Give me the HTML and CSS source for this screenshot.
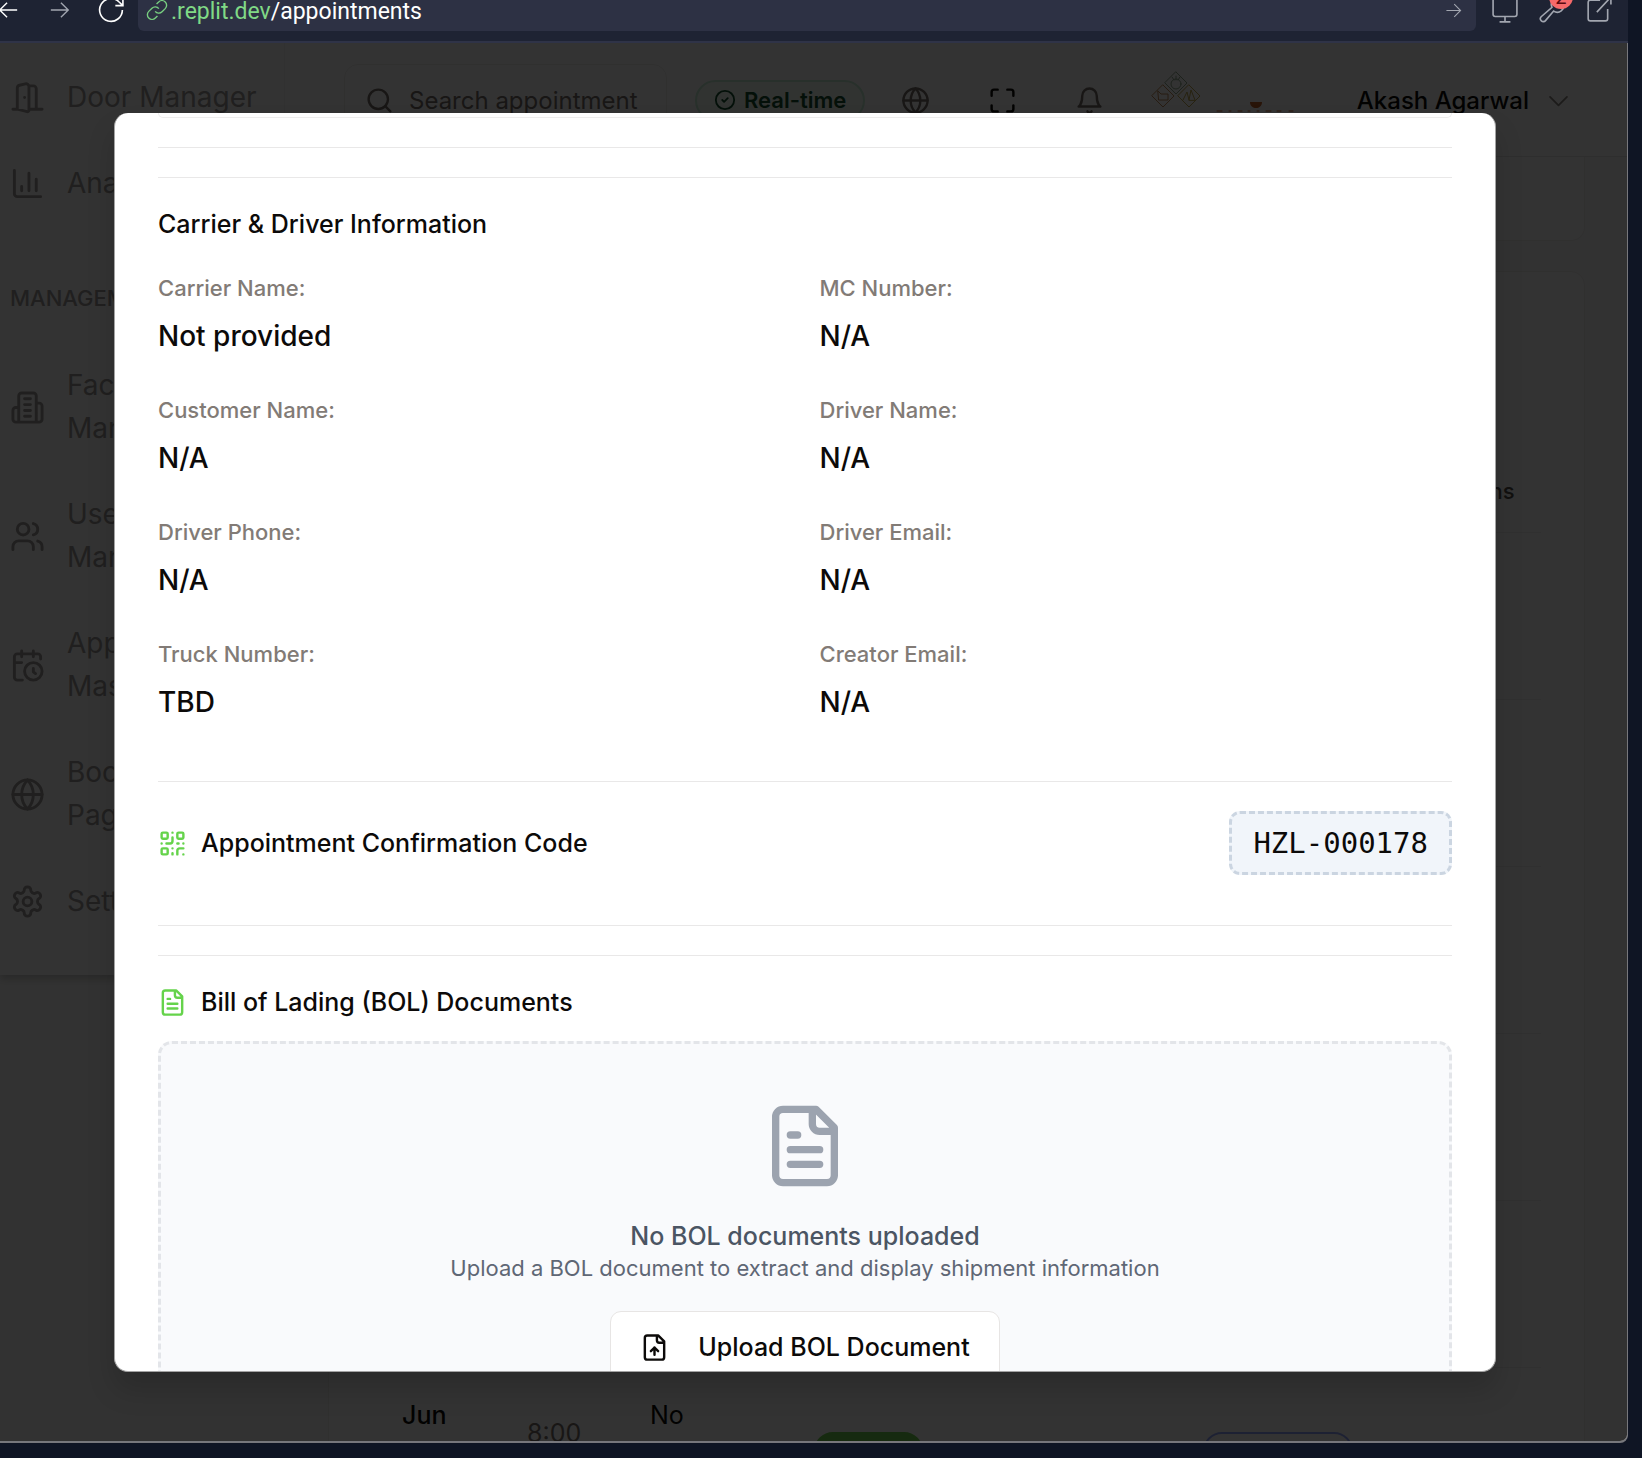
FILE: index.html
```html
<!DOCTYPE html>
<html lang="en">
<head>
<meta charset="utf-8">
<meta name="viewport" content="width=device-width, initial-scale=1">
<title>Appointments</title>
<link rel="stylesheet" href="styles.css">
</head>
<body>
<header class="toolbar">
  <button class="tool tool-back" aria-label="Back"><svg class="thin" viewBox="0 0 24 24"><path d="M22 12H3M11 4l-8 8 8 8"/></svg></button>
  <button class="tool tool-forward" aria-label="Forward"><svg class="thin" viewBox="0 0 24 24"><path d="M2 12h19M13 4l8 8-8 8"/></svg></button>
  <button class="tool tool-reload" aria-label="Reload"><svg class="thin" viewBox="0 0 24 24"><path d="M22.500 12A10.500 10.500 0 1 1 19.500 4.600L23 8M23 1v7h-7"/></svg></button>
  <div class="address">
    <svg class="link-icon thin" viewBox="0 0 24 24"><path d="M10 13.500a5 5 0 0 0 7.500.5l3.500-3.500a5 5 0 0 0-7.200-7.200L11.500 5.500M14 10.500a5 5 0 0 0-7.500-.5L3 13.500a5 5 0 0 0 7.200 7.200l2.300-2.200"/></svg>
    <span class="url"><span class="host">.replit.dev</span>/appointments</span>
    <button class="tool go" aria-label="Go"><svg class="thin" viewBox="0 0 24 24"><path d="M2 12h20M13 3l9 9-9 9"/></svg></button>
  </div>
  <div class="tools">
    <button class="tool" aria-label="Device preview"><svg class="thin" viewBox="0 0 24 24"><rect x="1" y="0" width="22" height="18" rx="2"/><path d="M12 18v5M7 23h10"/></svg></button>
    <button class="tool" aria-label="Developer tools, 2 messages"><svg class="thin" viewBox="0 0 24 24"><path d="M12 9.500a6 6 0 0 1 8-8l-3.500 3.500v3h3l3-2a6 6 0 0 1-9 7L6 21.800a2.600 2.600 0 0 1-4-3.600z"/></svg><span class="count">2</span></button>
    <button class="tool" aria-label="Open in new tab"><svg class="thin" viewBox="0 0 24 24"><path d="M13 3H4a2 2 0 0 0-2 2v15a2 2 0 0 0 2 2h14a2 2 0 0 0 2-2v-9M10 14 23 0M16 0h7v7"/></svg></button>
  </div>
</header>

<div class="viewport">
  <aside class="sidebar">
    <nav class="nav">
      <a class="nav-item" href="#doors"><svg viewBox="0 0 24 24"><path d="M13 4h3a2 2 0 0 1 2 2v14M2 20h3M13 20h9M10 12v.01M13 4.562v16.157a1 1 0 0 1-1.242.97L5 20V5.562a2 2 0 0 1 1.515-1.940l4-1A2 2 0 0 1 13 4.561Z"/></svg><span>Door Manager</span></a>
      <a class="nav-item" href="#analytics"><svg viewBox="0 0 24 24"><path d="M3 3v16a2 2 0 0 0 2 2h16M18 17V9M13 17V5M8 17v-3"/></svg><span>Analytics</span></a>
      <h2 class="nav-title">MANAGEMENT</h2>
      <a class="nav-item" href="#facilities"><svg viewBox="0 0 24 24"><path d="M6 22V4a2 2 0 0 1 2-2h8a2 2 0 0 1 2 2v18ZM6 12H4a2 2 0 0 0-2 2v6a2 2 0 0 0 2 2h2M18 9h2a2 2 0 0 1 2 2v9a2 2 0 0 1-2 2h-2M10 6h4M10 10h4M10 14h4M10 18h4"/></svg><span>Facility Management</span></a>
      <a class="nav-item" href="#users"><svg viewBox="0 0 24 24"><path d="M16 21v-2a4 4 0 0 0-4-4H6a4 4 0 0 0-4 4v2M22 21v-2a4 4 0 0 0-3-3.870M16 3.130a4 4 0 0 1 0 7.750"/><circle cx="9" cy="7" r="4"/></svg><span>User Management</span></a>
      <a class="nav-item" href="#master"><svg viewBox="0 0 24 24"><path d="M21 7.500V6a2 2 0 0 0-2-2H5a2 2 0 0 0-2 2v14a2 2 0 0 0 2 2h3.500M16 2v4M8 2v4M3 10h5M17.500 17.500 16 16.300V14"/><circle cx="16" cy="16" r="6"/></svg><span>Appointment Master</span></a>
      <a class="nav-item" href="#booking"><svg viewBox="0 0 24 24"><circle cx="12" cy="12" r="10"/><path d="M12 2a14.500 14.500 0 0 0 0 20 14.500 14.500 0 0 0 0-20M2 12h20"/></svg><span>Booking Pages</span></a>
      <a class="nav-item" href="#settings"><svg viewBox="0 0 24 24"><path d="M12.220 2h-.44a2 2 0 0 0-2 2v.18a2 2 0 0 1-1 1.730l-.43.25a2 2 0 0 1-2 0l-.15-.08a2 2 0 0 0-2.730.73l-.22.38a2 2 0 0 0 .73 2.730l.15.1a2 2 0 0 1 1 1.720v.51a2 2 0 0 1-1 1.740l-.15.09a2 2 0 0 0-.73 2.730l.22.38a2 2 0 0 0 2.730.73l.15-.08a2 2 0 0 1 2 0l.43.25a2 2 0 0 1 1 1.730V20a2 2 0 0 0 2 2h.44a2 2 0 0 0 2-2v-.18a2 2 0 0 1 1-1.730l.43-.25a2 2 0 0 1 2 0l.15.08a2 2 0 0 0 2.730-.73l.22-.39a2 2 0 0 0-.73-2.730l-.15-.08a2 2 0 0 1-1-1.740v-.5a2 2 0 0 1 1-1.740l.15-.09a2 2 0 0 0 .73-2.730l-.22-.38a2 2 0 0 0-2.730-.73l-.15.08a2 2 0 0 1-2 0l-.43-.25a2 2 0 0 1-1-1.730V4a2 2 0 0 0-2-2z"/><circle cx="12" cy="12" r="3"/></svg><span>Settings</span></a>
    </nav>
  </aside>

  <div class="page">
    <div class="topbar">
      <label class="search"><svg viewBox="0 0 24 24"><circle cx="11" cy="11" r="8"/><path d="m21 21-4.300-4.300"/></svg><input type="text" placeholder="Search appointment" aria-label="Search appointment"></label>
      <span class="live"><svg viewBox="0 0 24 24"><circle cx="12" cy="12" r="10"/><path d="m9 12 2 2 4-4"/></svg>Real-time</span>
      <div class="actions">
        <button class="icon-button" aria-label="Language"><svg viewBox="0 0 24 24"><circle cx="12" cy="12" r="10"/><path d="M12 2a14.500 14.500 0 0 0 0 20 14.500 14.500 0 0 0 0-20M2 12h20"/></svg></button>
        <button class="icon-button dark" aria-label="Full screen"><svg viewBox="0 0 24 24"><path d="M8 3H5a2 2 0 0 0-2 2v3M21 8V5a2 2 0 0 0-2-2h-3M3 16v3a2 2 0 0 0 2 2h3M16 21h3a2 2 0 0 0 2-2v-3"/></svg></button>
        <button class="icon-button" aria-label="Notifications"><svg viewBox="0 0 24 24"><path d="M6 8a6 6 0 0 1 12 0c0 7 3 9 3 9H3s3-2 3-9M10.300 21a1.940 1.940 0 0 0 3.400 0"/></svg></button>
      </div>
      <svg class="logo" viewBox="0 0 150 60" aria-hidden="true">
        <g stroke="#8fa88c"><path d="M25 2 36 13 25 24 14 13Z"/><circle cx="25" cy="14" r="5"/><path d="M21 7l2 3M25 6v4M29 7l-2 3"/></g>
        <g stroke="#c08a5a"><path d="M12 15 23 26 12 37 1 26Z"/><path d="M7 21l3 3h7v6H8z"/></g>
        <g stroke="#c0a850"><path d="M38 15 49 26 38 37 27 26Z"/><path d="M32 30l4-8 2 8M38 30l2-10 4 10z"/></g>
        <path d="M99 32h12c0 8-12 8-12 0Z" fill="#c8642a" stroke="none"/>
        <path d="M66 41h5M78 41h2M87 41h4M97 41h2M106 41h2M115 41h5M126 41h4M138 41h4" stroke="#c8642a"/>
      </svg>
      <button class="user">Akash Agarwal<svg viewBox="0 0 24 24"><path d="m5 9 7 7 7-7"/></svg></button>
    </div>

    <main class="main">
      <section class="card filters"></section>
      <section class="card list">
        <h1 class="list-title">Appointments</h1>
        <table class="table">
          <colgroup><col class="c-date"><col class="c-time"><col class="c-place"><col class="c-type"><col class="c-truck"><col class="c-status"><col></colgroup>
          <thead><tr><td></td><td></td><td></td><td></td><td></td><td></td><th scope="col">Actions</th></tr></thead>
          <tbody>
            <tr><td colspan="7"></td></tr>
            <tr><td colspan="7"></td></tr>
            <tr><td colspan="7"></td></tr>
            <tr><td colspan="7"></td></tr>
            <tr><td colspan="7"></td></tr>
            <tr>
              <td class="strong">Jun<br>12,<br>2025</td>
              <td class="time">8:00<br>AM</td>
              <td>No<br>facility<br>set</td>
              <td><span class="pill solid">inbound</span></td>
              <td>TBD</td>
              <td><span class="pill outline">scheduled</span></td>
              <td>View</td>
            </tr>
          </tbody>
        </table>
      </section>
    </main>
  </div>

  <div class="overlay">
    <div class="dialog" role="dialog" aria-modal="true" aria-label="Appointment details">
      <div class="previous"></div>
      <hr>
      <hr>
      <section class="carrier">
        <h2 class="heading">Carrier &amp; Driver Information</h2>
        <dl class="details">
          <div><dt>Carrier Name:</dt><dd>Not provided</dd></div>
          <div><dt>MC Number:</dt><dd>N/A</dd></div>
          <div><dt>Customer Name:</dt><dd>N/A</dd></div>
          <div><dt>Driver Name:</dt><dd>N/A</dd></div>
          <div><dt>Driver Phone:</dt><dd>N/A</dd></div>
          <div><dt>Driver Email:</dt><dd>N/A</dd></div>
          <div><dt>Truck Number:</dt><dd>TBD</dd></div>
          <div><dt>Creator Email:</dt><dd>N/A</dd></div>
        </dl>
      </section>
      <hr>
      <section class="confirmation">
        <h2 class="heading"><svg viewBox="0 0 24 24"><rect x="3" y="3" width="5" height="5" rx="1"/><rect x="16" y="3" width="5" height="5" rx="1"/><rect x="3" y="16" width="5" height="5" rx="1"/><path d="M21 16h-3a2 2 0 0 0-2 2v3M21 21v.01M12 7v3a2 2 0 0 1-2 2H7M3 12h.01M12 3h.01M12 16v.01M16 12h1M21 12v.01M12 21v-1"/></svg>Appointment Confirmation Code</h2>
        <code class="code">HZL-000178</code>
      </section>
      <hr>
      <hr>
      <section class="bol">
        <h2 class="heading"><svg viewBox="0 0 24 24"><path d="M15 2H6a2 2 0 0 0-2 2v16a2 2 0 0 0 2 2h12a2 2 0 0 0 2-2V7ZM14 2v4a2 2 0 0 0 2 2h4M10 9H8M16 13H8M16 17H8"/></svg>Bill of Lading (BOL) Documents</h2>
        <div class="dropzone">
          <svg viewBox="0 0 24 24"><path d="M15 2H6a2 2 0 0 0-2 2v16a2 2 0 0 0 2 2h12a2 2 0 0 0 2-2V7ZM14 2v4a2 2 0 0 0 2 2h4M10 9H8M16 13H8M16 17H8"/></svg>
          <h3>No BOL documents uploaded</h3>
          <p>Upload a BOL document to extract and display shipment information</p>
          <button class="upload"><svg viewBox="0 0 24 24"><path d="M15 2H6a2 2 0 0 0-2 2v16a2 2 0 0 0 2 2h12a2 2 0 0 0 2-2V7ZM14 2v4a2 2 0 0 0 2 2h4M12 12v6M15 15l-3-3-3 3"/></svg>Upload BOL Document</button>
        </div>
      </section>
    </div>
  </div>
</div>
</body>
</html>
```
FILE: styles.css
```css
* {
  box-sizing: border-box;
}

body {
  margin: 0;
  height: 100vh;
  padding: 0 14px 15px 0;
  display: flex;
  flex-direction: column;
  overflow: hidden;
  background: #0f1524;
  color: #0c0a09;
  font-family: Inter, "Liberation Sans", sans-serif;
  font-size: 25px;
}

h1, h2, h3, p, dl, dd {
  margin: 0;
  font-weight: 500;
}

button {
  border: 0;
  padding: 0;
  background: none;
  color: inherit;
  font: inherit;
}

svg {
  flex: none;
  width: 29px;
  height: 29px;
  fill: none;
  stroke: currentColor;
  stroke-width: 2;
  stroke-linecap: round;
  stroke-linejoin: round;
}

/* Browser toolbar */
.toolbar {
  flex: none;
  display: flex;
  align-items: center;
  height: 43px;
  padding-bottom: 21px;
  border-bottom: 2px solid #2f3347;
  background: #1e2333;
  color: #fff;
}

.tool {
  position: relative;
  flex: none;
  display: flex;
  color: #a2a6b0;
}

.tool svg {
  width: 26px;
  height: 26px;
}

svg.thin {
  stroke-width: 1.5;
  stroke-linecap: butt;
  stroke-linejoin: miter;
}

.tool-back,
.tool-reload {
  color: #fff;
}

.tool-back svg,
.tool-forward svg {
  width: 22px;
  height: 22px;
}

.tool-back {
  margin-left: -3px;
}

.tool-forward {
  margin: 0 27px 0 30px;
}

.address {
  flex: 1;
  align-self: stretch;
  display: flex;
  align-items: center;
  margin: 0 16px -11px 14px;
  padding: 0 14px 11px 8px;
  border-radius: 0 0 6px 6px;
  background: #2d3144;
}

.link-icon {
  width: 22px;
  height: 22px;
  color: #78cf80;
}

.url {
  margin-left: 3px;
  padding-top: 4px;
  flex: 1;
  font: 23px/20px Roboto, sans-serif;
}

.host {
  color: #80d986;
}

.tool.go svg {
  width: 17px;
  height: 17px;
}

.tools {
  display: flex;
  gap: 21px;
  padding-right: 16px;
}

.count {
  position: absolute;
  right: -8px;
  top: -12px;
  width: 24px;
  height: 24px;
  border-radius: 12px;
  background: #f5696a;
  color: #5a0a10;
  font-size: 20px;
  line-height: 24px;
  text-align: center;
}

/* Application shell */
.viewport {
  position: relative;
  flex: 1;
  min-height: 0;
  display: grid;
  grid-template-columns: 285px minmax(0, 1fr);
  overflow: hidden;
  border: solid #77777c;
  border-width: 0 1px 2px 0;
  border-radius: 0 0 8px 0;
  background: #fafaf9;
}

.sidebar {
  align-self: start;
  padding: 13px 20px 32px 10px;
  border-right: 1px solid #f6f6f5;
  background: #fff;
  box-shadow: 0 4px 8px rgba(0, 0, 0, .2);
  color: #a09c99;
}

.nav {
  display: flex;
  flex-direction: column;
  gap: 3px;
}

.nav-item {
  display: flex;
  align-items: center;
  gap: 22px;
  padding: 20px 0;
  color: inherit;
  font-size: 28px;
  line-height: 43px;
  text-decoration: none;
}

.nav-item svg {
  width: 35px;
  height: 35px;
}

.nav-title {
  padding: 54px 0 26px;
  font-size: 22px;
  line-height: 33px;
}

.topbar {
  display: flex;
  align-items: center;
  padding: 21px 54px 20px 59px;
  border-bottom: 1px solid #e7e5e4;
  background: #fff;
}

.search {
  display: flex;
  align-items: center;
  gap: 15px;
  width: 323px;
  height: 72px;
  padding: 0 18px 0 20px;
  border: 1px solid #efeeec;
  border-radius: 14px;
  color: #78716c;
}

.search input {
  flex: 1;
  min-width: 0;
  padding: 0;
  border: 0;
  background: none;
  color: inherit;
  font: inherit;
  font-size: 24px;
}

.search input::placeholder {
  color: inherit;
}

.live {
  display: flex;
  align-items: center;
  gap: 8px;
  height: 41px;
  margin: 0 21px 0 28px;
  padding: 0 17px;
  border: 2px solid #c5efd4;
  border-radius: 21px;
  background: #f3fcf6;
  color: #14532d;
  font-size: 22px;
  font-weight: 600;
}

.live svg {
  width: 22px;
  height: 22px;
}

.actions {
  display: flex;
  gap: 29px;
}

.icon-button {
  display: flex;
  justify-content: center;
  width: 58px;
  color: #78716c;
}

.icon-button.dark {
  color: #0c0a09;
}

svg.logo {
  width: 150px;
  height: 60px;
  margin-left: 33px;
  stroke-width: 1;
}

.user {
  display: flex;
  align-items: center;
  gap: 15px;
  margin-left: auto;
  font-size: 24px;
  font-weight: 500;
}

.user svg {
  color: #8c8681;
  stroke-width: 1.5;
}

.main {
  display: flex;
  flex-direction: column;
  gap: 30px;
  padding: 0 42px 0 43px;
}

.card {
  border: 1px solid #efeeec;
  border-radius: 14px;
  background: #fff;
}

.filters {
  height: 84px;
  border-top: 0;
  border-radius: 0 0 14px 14px;
}

.list {
  padding: 0 43px;
}

.list-title {
  padding: 58px 0;
  font-size: 44px;
  line-height: 62px;
}

.table {
  width: 100%;
  table-layout: fixed;
  border-collapse: collapse;
  line-height: 36px;
}

.c-date { width: 125px; }
.c-time { width: 123px; }
.c-place { width: 164px; }
.c-type { width: 264px; }
.c-truck { width: 125px; }
.c-status { width: 232px; }

.table tr {
  height: 167px;
  border-bottom: 1px solid #f0efee;
}

.table thead tr {
  height: 82px;
}

.table td,
.table th {
  padding: 0 0 0 30px;
  text-align: left;
  white-space: nowrap;
}

.table th {
  color: #57534e;
  font-size: 22px;
  font-weight: 500;
}

.strong {
  font-weight: 500;
}

.time {
  color: #78716c;
}

.pill {
  display: inline-block;
  height: 38px;
  padding: 0 24px;
  border: 2px solid #93a5fd;
  border-radius: 19px;
  color: #4f63d8;
  font-size: 20px;
  line-height: 34px;
}

.pill.solid {
  padding: 0 14px;
  border-color: #6ed24f;
  background: #6ed24f;
  color: #14532d;
}

/* Appointment dialog */
.overlay {
  position: absolute;
  inset: 0;
  display: flex;
  padding: 70px 131px 69px 114px;
  background: rgba(0, 0, 0, .8);
}

.dialog {
  flex: 1;
  display: flex;
  flex-direction: column;
  gap: 29px;
  overflow: hidden;
  padding: 0 43px;
  border: solid #a3a3a3;
  border-width: 0 1px 1px;
  border-radius: 14px;
  background: #fff;
  box-shadow: 0 18px 28px rgba(0, 0, 0, .15);
}

.dialog > * {
  flex: none;
}

.dialog hr {
  width: 100%;
  height: 1px;
  margin: 0;
  border: 0;
  background: #e9e8e8;
}

.previous {
  height: 5px;
  border: 1px solid #eeeded;
  border-top: 0;
  border-radius: 0 0 14px 14px;
}

.heading {
  display: flex;
  align-items: center;
  gap: 14px;
  font-size: 25px;
  line-height: 34px;
}

.heading svg {
  color: #65d34b;
}

.carrier {
  padding-bottom: 28px;
}

.details {
  display: grid;
  grid-template-columns: 1fr 1fr;
  gap: 37px 29px;
  margin-top: 32px;
}

.details dt {
  color: #827b76;
  font-size: 22px;
  font-weight: 500;
  line-height: 30px;
}

.details dd {
  margin-top: 11px;
  font-size: 28px;
  line-height: 44px;
}

.confirmation {
  display: flex;
  align-items: center;
  justify-content: space-between;
  margin-bottom: 21px;
}

.code {
  padding: 0 21px;
  border: 3px dashed #cbd5e1;
  border-radius: 11px;
  background: #f1f5fa;
  font: 29px/58px "DejaVu Sans Mono", monospace;
}

.dropzone {
  display: flex;
  flex-direction: column;
  align-items: center;
  margin-top: 22px;
  padding: 58px 29px;
  border: 3px dashed #e3e5e9;
  border-radius: 14px;
  background: #f9fafc;
  color: #4b5563;
}

.dropzone > svg {
  width: 88px;
  height: 88px;
  margin-bottom: 29px;
  color: #9ca3af;
}

.dropzone h3 {
  font-size: 25px;
  line-height: 34px;
}

.dropzone p {
  color: #5f6775;
  font-size: 22px;
  font-weight: 400;
  line-height: 30px;
}

.upload {
  display: flex;
  align-items: center;
  gap: 29px;
  height: 72px;
  margin-top: 28px;
  padding: 0 29px;
  border: 1px solid #e7e5e4;
  border-radius: 11px;
  background: #fff;
  color: #0c0a09;
  font-weight: 500;
}
```
